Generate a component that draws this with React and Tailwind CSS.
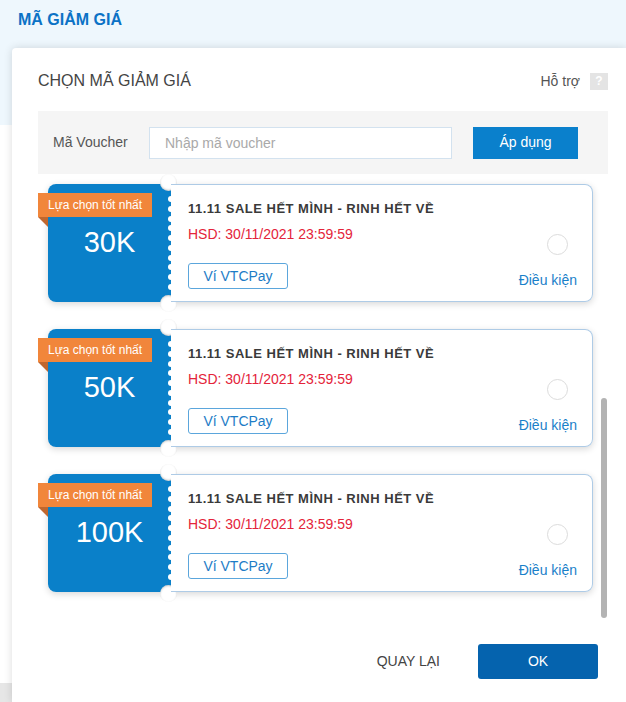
import React from 'react';

const vouchers = [
  { value: '30K' },
  { value: '50K' },
  { value: '100K' },
];

const Scallops = () => (
  <div className="absolute right-[-3px] top-[12px] bottom-[12px] flex flex-col justify-between">
    {Array.from({ length: 10 }).map((_, i) => (
      <span key={i} className="block h-[6px] w-[6px] rounded-full bg-white" />
    ))}
  </div>
);

const VoucherCard = ({ value }) => (
  <div className="relative flex h-[118px] rounded-[8px] shadow-[0_2px_7px_rgba(0,0,0,0.16)]">
    {/* left blue stub */}
    <div className="relative flex w-[123px] items-center justify-center rounded-l-[8px] bg-[#0a80c9]">
      <span className="text-[29px] text-white">{value}</span>
      <Scallops />
    </div>

    {/* badge */}
    <div className="absolute left-[-10px] top-[9px] flex h-[24px] w-[114px] items-center bg-[#f1863b] pl-[10px] text-[12px] text-white">
      Lựa chọn tốt nhất
    </div>
    <div className="absolute left-[-10px] top-[33px] h-0 w-0 border-l-[10px] border-t-[10px] border-l-transparent border-t-[#c0672e]" />

    {/* notches */}
    <span className="absolute left-[112px] top-[-10px] h-[17px] w-[17px] rounded-full bg-white shadow-[inset_0_-1px_2px_rgba(0,0,0,0.22)]" />
    <span className="absolute bottom-[-10px] left-[112px] h-[17px] w-[17px] rounded-full bg-white shadow-[inset_0_1px_2px_rgba(0,0,0,0.22)]" />

    {/* right content */}
    <div className="relative flex-1 rounded-r-[8px] border border-l-0 border-[#aecbe6] bg-white pl-[17px] pt-[16px]">
      <div className="text-[13px] font-bold leading-4 tracking-[0.5px] text-[#3a3a3a]">
        11.11 SALE HẾT MÌNH - RINH HẾT VỀ
      </div>
      <div className="mt-[9px] text-[14px] leading-4 text-[#e4243a]">HSD: 30/11/2021 23:59:59</div>
      <button className="mt-[21px] flex h-[26px] w-[100px] items-center justify-center rounded-[3px] border border-[#5ba6dc] text-[14px] text-[#1d7cc6]">
        Ví VTCPay
      </button>
      <span className="absolute right-[24px] top-[49px] h-[21px] w-[21px] rounded-full border border-[#dcdcdc]" />
      <span className="absolute bottom-[13px] right-[15px] text-[14px] leading-4 text-[#1a80c9]">Điều kiện</span>
    </div>
  </div>
);

export default function App() {
  return (
    <div className="relative h-[702px] w-[626px] overflow-hidden bg-white font-['Liberation_Sans',Arial,sans-serif]">
      {/* page behind the dialog */}
      <div className="h-[125px] bg-[#eef7fd] px-[18px] pt-[10px]">
        <h1 className="text-[16px] font-bold leading-5 text-[#0b72c6]">MÃ GIẢM GIÁ</h1>
      </div>
      <div className="h-[558px]" />
      <div className="h-[19px] bg-[#e6e6e6]" />

      {/* dialog */}
      <div className="absolute bottom-0 left-[12px] right-0 top-[48px] flex flex-col rounded-tl-[4px] bg-white shadow-[0_0_8px_rgba(0,0,0,0.14)]">
        <div className="flex h-[43px] items-center justify-between pl-[26px] pr-[18px] pt-[23px]">
          <h2 className="text-[16px] leading-5 text-[#444]">CHỌN MÃ GIẢM GIÁ</h2>
          <div className="flex items-center gap-[10px]">
            <span className="text-[14px] leading-5 text-[#555]">Hỗ trợ</span>
            <span className="flex h-[17px] w-[18px] items-center justify-center bg-[#e4e4e4] text-[12px] font-bold leading-4 text-white">?</span>
          </div>
        </div>

        <div className="ml-[26px] mr-[18px] mt-[20px] flex h-[63px] items-center bg-[#f5f5f5] pl-[15px]">
          <span className="w-[96px] text-[14px] text-[#555]">Mã Voucher</span>
          <input
            className="h-[32px] w-[303px] border border-[#d3e2ef] bg-white px-[15px] text-[14px] outline-none placeholder:text-[#a9a9a9]"
            placeholder="Nhập mã voucher"
          />
          <button className="ml-[21px] h-[32px] w-[105px] bg-[#0a80cc] text-[14px] text-white">Áp dụng</button>
        </div>

        {/* list */}
        <div className="relative ml-[26px] mr-[18px] h-[458px] overflow-hidden">
          <div className="flex flex-col gap-[27px] pl-[10px] pr-[15px] pt-[10px]">
            {vouchers.map((v) => (
              <VoucherCard key={v.value} value={v.value} />
            ))}
          </div>
          <div className="absolute right-[1px] top-[224px] h-[220px] w-[6px] rounded-full bg-[#b3b3b3]" />
        </div>

        <div className="flex items-center justify-end gap-[38px] pr-[28px] pt-[12px]">
          <button className="text-[14px] text-[#444]">QUAY LẠI</button>
          <button className="h-[35px] w-[120px] rounded-[3px] bg-[#0563ae] text-[14px] text-white">OK</button>
        </div>
      </div>
    </div>
  );
}
